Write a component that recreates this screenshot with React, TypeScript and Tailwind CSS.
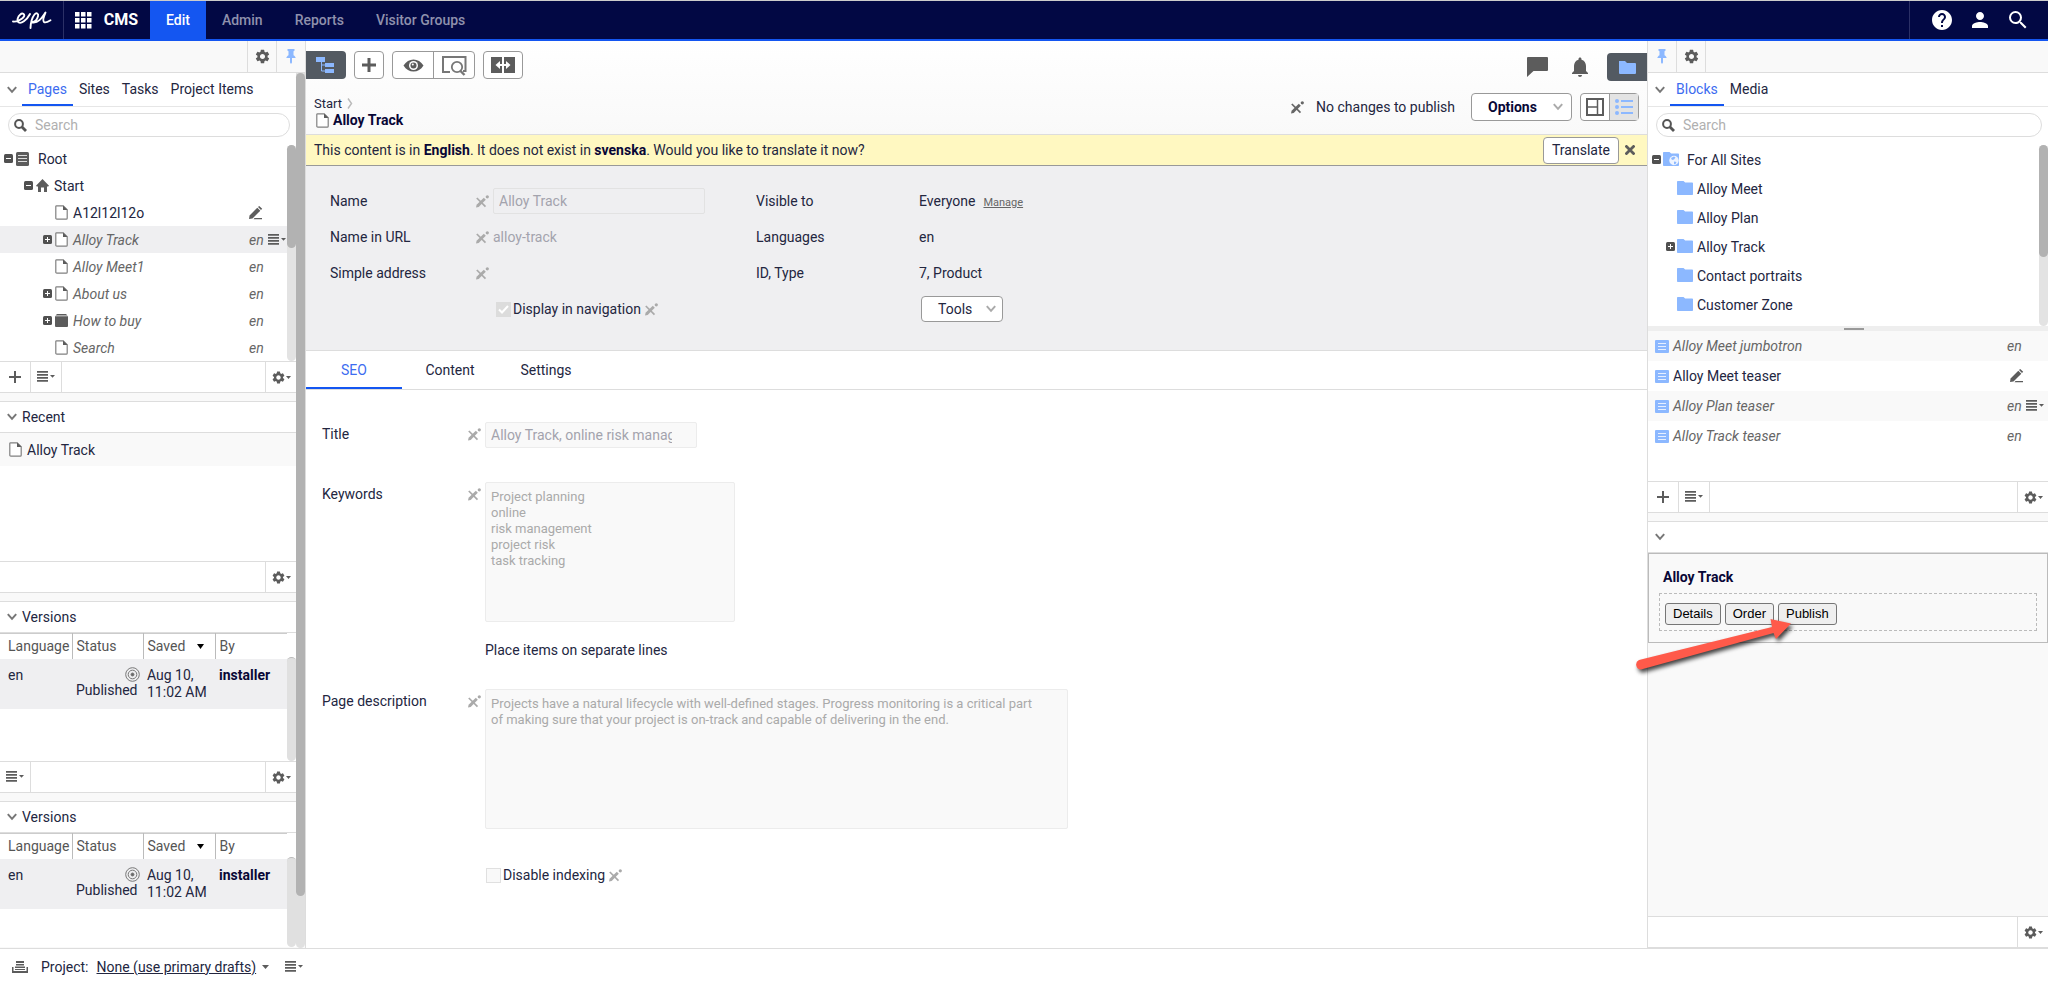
import { useState } from "react";
import type { ReactNode } from "react";
import clsx from "clsx";
import { MdHelp, MdNotifications, MdPerson, MdSearch, MdSettings } from "react-icons/md";

interface IconProps {
  className?: string;
}

function EpiLogo() {
  return (
    <svg width="40" height="20" viewBox="0 0 40 20" fill="none" stroke="white" strokeWidth="1.9" strokeLinecap="round" strokeLinejoin="round" aria-hidden="true">
      <path d="M1 11.5C4 12 10.5 9.500 12 6.500C13 4 10.500 2.500 8.300 4.500C5.800 6.500 4.500 10.500 6.500 12.300C9 14.300 14.500 10.500 18 4" />
      <path d="M18.500 18C18.700 13 20.500 7 22.500 4.500C24.500 2.200 26.800 3.500 26 6.300C25.200 9.500 22.500 12 20 12.300C26 13.500 29.500 8.500 33.500 2.500C31.500 7 30.500 10.500 32 12C33.500 13.200 36 11.800 38.500 10.200" />
    </svg>
  );
}

function AppsIcon() {
  return (
    <svg width="17" height="17" viewBox="0 0 17 17" fill="white" aria-hidden="true">
      <path d="M0 0h4.500v4.500H0zM6 0h4.500v4.500H6zM12 0h4.500v4.500H12zM0 6h4.500v4.500H0zM6 6h4.500v4.500H6zM12 6h4.500v4.500H12zM0 12h4.500v4.500H0zM6 12h4.500v4.500H6zM12 12h4.500v4.500H12z" />
    </svg>
  );
}

function ChevronDown({ className }: IconProps) {
  return (
    <svg width="10" height="8" viewBox="0 0 10 8" fill="none" stroke="currentColor" strokeWidth="2" className={className} aria-hidden="true">
      <path d="M0.800 1.200L5 5.800L9.200 1.200" />
    </svg>
  );
}

function Pin() {
  return (
    <svg width="10" height="15" viewBox="0 0 10 15" fill="#8cb8ff" aria-hidden="true">
      <path d="M1.500 0h7v1.800l-1 .4v4c1.200.6 2 1.500 2.200 2.800H6v4.500L5 15l-1-1.500V9H.3C.5 7.700 1.300 6.800 2.500 6.200v-4l-1-.4z" />
    </svg>
  );
}

function Magnifier() {
  return (
    <svg width="13" height="13" viewBox="0 0 13 13" fill="none" stroke="#555" aria-hidden="true">
      <circle cx="5" cy="5" r="3.900" strokeWidth="2" />
      <path d="M8 8l4 4" strokeWidth="2.800" />
    </svg>
  );
}

function PageIcon() {
  return (
    <svg width="13" height="15" viewBox="0 0 13 15" className="shrink-0" aria-hidden="true">
      <path d="M1.500.8h6.700L12.200 4.800v8.400a1 1 0 0 1-1 1H1.800a1 1 0 0 1-1-1V1.500a.7.7 0 0 1 .7-.7z" fill="white" stroke="#808080" strokeWidth="1.200" />
      <path d="M8 .5L12.500 5H8z" fill="#5c5c5c" />
    </svg>
  );
}

function RootIcon() {
  return (
    <svg width="13" height="14" viewBox="0 0 13 14" className="shrink-0" aria-hidden="true">
      <rect width="13" height="14" rx="1.500" fill="#5c5c5c" />
      <path d="M2 3.500h9M2 6.500h9M2 9.500h9" stroke="#ddd" />
    </svg>
  );
}

function HomeIcon() {
  return (
    <svg width="13" height="13" viewBox="0 0 13 13" fill="#5c5c5c" className="shrink-0" aria-hidden="true">
      <path d="M6.500 0L13 6.800l-.8.7H11V13H8V8.500H5V13H2V7.500H.8L0 6.800z" />
    </svg>
  );
}

function BoxIcon() {
  return (
    <svg width="13" height="13" viewBox="0 0 13 13" className="shrink-0" fill="#5c5c5c" aria-hidden="true">
      <path d="M2 0h9l1.500 1.500H.5z" />
      <path d="M0 2.200h13V12a1 1 0 0 1-1 1H1a1 1 0 0 1-1-1z" />
    </svg>
  );
}

function Expander({ open }: { open: boolean }) {
  return (
    <svg width="9" height="9" viewBox="0 0 9 9" className="shrink-0" aria-hidden="true">
      <rect width="9" height="9" rx="1.500" fill="#505050" />
      <path d={open ? "M2 4.500h5" : "M2 4.500h5M4.500 2v5"} stroke="white" />
    </svg>
  );
}

function PencilIcon() {
  return (
    <svg width="14" height="14" viewBox="0 0 14 14" fill="#5c5c5c" aria-hidden="true">
      <path d="M0 13l.6-3.500L8.300 1.800l3 3L3.500 12.500z" />
      <path d="M9 1.100L10.200 0 13.200 2.800l-1.200 1.300zM5.500 12h7.500v1.200H4.500z" />
    </svg>
  );
}

// pencil with a stroke across it, for values that can't be edited
function NoEdit({ className }: IconProps) {
  return (
    <svg width="13" height="13" viewBox="0 0 13 13" className={clsx("shrink-0", className)} aria-hidden="true">
      <path d="M.8 3l8.700 8.700" stroke="currentColor" strokeWidth="1.700" />
      <path d="M0 12.500l.6-2.700L7.800 2.700l2 2L2.700 11.900z" fill="currentColor" />
      <circle cx="11.300" cy="1.800" r="1.600" fill="currentColor" />
    </svg>
  );
}

function FolderIcon({ globe }: { globe?: boolean }) {
  return (
    <svg width="16" height="15" viewBox="0 0 16 15" className="shrink-0" aria-hidden="true">
      <path d="M.8 0h5.700l1.700 1.500h7c.5 0 .8.300.8.800v11c0 .5-.3.800-.8.800H.8c-.5 0-.8-.3-.8-.8V.8C0 .3.300 0 .8 0z" fill="#8cb8ff" />
      {globe && (
        <>
          <circle cx="11" cy="8.500" r="4.700" fill="#eef4ff" />
          <path d="M8 6l3-1.500 1.500 1-1.500 2-2 .5zM11 9.500l2.500.5-1 2-1.500.3z" fill="#8cb8ff" />
        </>
      )}
    </svg>
  );
}

function BlockIcon() {
  return (
    <svg width="14" height="13" viewBox="0 0 14 13" className="shrink-0" aria-hidden="true">
      <rect width="14" height="13" rx="1" fill="#8cb8ff" />
      <path d="M3 3.500h8M3 6.500h8M3 9.500h8" stroke="#e6efff" />
    </svg>
  );
}

function ListMenu() {
  return (
    <svg width="18" height="12" viewBox="0 0 18 12" fill="#5c5c5c" className="shrink-0" aria-hidden="true">
      <path d="M0 0h11v1.800H0zM0 3h11v1.800H0zM0 6h11v1.800H0zM0 9h11v1.800H0zM13 4h5l-2.500 2.800z" />
    </svg>
  );
}

function PlusIcon() {
  return (
    <svg width="12" height="12" viewBox="0 0 12 12" stroke="#5c5c5c" strokeWidth="2" aria-hidden="true">
      <path d="M6 0v12M0 6h12" />
    </svg>
  );
}

function GearMenu() {
  return (
    <span className="flex items-center text-[#5c5c5c]">
      <MdSettings size={15} />
      <svg width="5" height="3" viewBox="0 0 5 3" fill="currentColor" aria-hidden="true">
        <path d="M0 0h5L2.500 3z" />
      </svg>
    </span>
  );
}

function TargetIcon() {
  return (
    <svg width="15" height="15" viewBox="0 0 15 15" fill="none" stroke="#777" className="ml-auto" aria-hidden="true">
      <circle cx="7.500" cy="7.500" r="6.800" />
      <circle cx="7.500" cy="7.500" r="4.300" />
      <circle cx="7.500" cy="7.500" r="1.500" fill="#666" />
    </svg>
  );
}

function IconCell({ label, className, children }: { label: string; className?: string; children: ReactNode }) {
  return (
    <button type="button" aria-label={label} className={clsx("flex h-full shrink-0 items-center justify-center", className)}>
      {children}
    </button>
  );
}

function GadgetFooter({ add, menu }: { add?: boolean; menu?: boolean }) {
  return (
    <div className="flex h-8 shrink-0 border-y border-[#ddd] bg-white">
      {add && (
        <IconCell label="Add" className="w-[31px] border-r border-[#ddd]">
          <PlusIcon />
        </IconCell>
      )}
      {menu && (
        <IconCell label="Menu" className="w-[31px] border-r border-[#ddd]">
          <ListMenu />
        </IconCell>
      )}
      <IconCell label="Settings" className="ml-auto w-[31px] border-l border-[#ddd]">
        <GearMenu />
      </IconCell>
    </div>
  );
}

function GadgetHeader({ title }: { title?: string }) {
  return (
    <div className="mt-2 flex h-8 shrink-0 items-center gap-[5px] border-y border-[#ddd] bg-white px-[7px]">
      <ChevronDown className="text-[#777]" />
      {title && <h2>{title}</h2>}
    </div>
  );
}

function Scrollbar({ thumb }: { thumb: string }) {
  return (
    <div className="w-[9px] shrink-0 rounded-full bg-[#e3e3e3]">
      <div className={clsx("rounded-full bg-[#b2b2b2]", thumb)} />
    </div>
  );
}

function TabBar({ tabs }: { tabs: string[] }) {
  const [active, setActive] = useState(tabs[0]);
  return (
    <div className="flex h-[34px] shrink-0 items-stretch border-b border-[#e6e6e6] bg-white pl-[7px]">
      <ChevronDown className="mt-[13px] mr-[5px] text-[#777]" />
      {tabs.map((tab) => (
        <button
          key={tab}
          type="button"
          onClick={() => setActive(tab)}
          className={clsx("border-b-2 px-[6px]", active === tab ? "border-[#1456f1] text-[#3d6cf0]" : "border-transparent")}
        >
          {tab}
        </button>
      ))}
    </div>
  );
}

function SearchBox({ label }: { label: string }) {
  return (
    <div className="py-[6px] pr-[6px] pl-2">
      <label className="flex h-6 items-center gap-2 rounded-full border border-[#ddd] bg-white px-[5px]">
        <Magnifier />
        <input type="search" placeholder="Search" aria-label={label} className="min-w-0 flex-1 outline-none placeholder:text-[#b0b0b0]" />
      </label>
    </div>
  );
}

interface TreeItem {
  name: string;
  indent: string;
  icon: ReactNode;
  open?: boolean;
  lang?: string;
  edited?: boolean;
  selected?: boolean;
}

const pageTree: TreeItem[] = [
  { name: "Root", indent: "pl-1", icon: <RootIcon />, open: true },
  { name: "Start", indent: "pl-6", icon: <HomeIcon />, open: true },
  { name: "A12l12l12o", indent: "pl-[55px]", icon: <PageIcon />, edited: true },
  { name: "Alloy Track", indent: "pl-[43px]", icon: <PageIcon />, open: false, lang: "en", selected: true },
  { name: "Alloy Meet1", indent: "pl-[55px]", icon: <PageIcon />, lang: "en" },
  { name: "About us", indent: "pl-[43px]", icon: <PageIcon />, open: false, lang: "en" },
  { name: "How to buy", indent: "pl-[43px]", icon: <BoxIcon />, open: false, lang: "en" },
  { name: "Search", indent: "pl-[55px]", icon: <PageIcon />, lang: "en" },
];

const folders = [
  { name: "Alloy Meet" },
  { name: "Alloy Plan" },
  { name: "Alloy Track", closed: true },
  { name: "Contact portraits" },
  { name: "Customer Zone" },
];

const blocks = [
  { name: "Alloy Meet jumbotron", lang: "en" },
  { name: "Alloy Meet teaser" },
  { name: "Alloy Plan teaser", lang: "en", menu: true },
  { name: "Alloy Track teaser", lang: "en" },
];

function PageTree() {
  return (
    <div className="flex bg-white">
      <ul className="min-w-0 flex-1">
        {pageTree.map((item) => (
          <li key={item.name} className={clsx("flex h-[27px] items-center", item.indent, item.selected && "bg-[#efeff1]")}>
            {item.open !== undefined && (
              <span className="mr-[3px]">
                <Expander open={item.open} />
              </span>
            )}
            {item.icon}
            <span className={clsx(item.name === "Root" ? "ml-[9px]" : "ml-[5px]", item.lang && "text-[#666] italic")}>{item.name}</span>
            <span className="ml-auto flex w-[38px] items-center gap-1 text-[#666] italic">
              {item.lang}
              {item.edited && <PencilIcon />}
              {item.selected && <ListMenu />}
            </span>
          </li>
        ))}
      </ul>
      <Scrollbar thumb="h-[103px]" />
    </div>
  );
}

function Versions({ short }: { short?: boolean }) {
  return (
    <>
      <GadgetHeader title="Versions" />
      <div className={clsx("flex shrink-0 bg-white", short ? "h-[114px]" : "h-32")}>
        <div className="min-w-0 flex-1">
          <table className="w-full table-fixed border-collapse text-left">
            <thead>
              <tr className="h-[25px] border-t border-[#ccc] text-[#555]">
                <th className="w-[72px] border-r border-[#bbb] pl-2 font-normal">Language</th>
                <th className="w-[71px] border-r border-[#bbb] pl-1 font-normal">Status</th>
                <th className="w-[72px] border-r border-[#bbb] pl-1 font-normal">
                  <span className="flex items-center justify-between pr-[11px]">
                    Saved
                    <svg width="7" height="5" viewBox="0 0 7 5" aria-hidden="true">
                      <path d="M0 0h7L3.500 5z" />
                    </svg>
                  </span>
                </th>
                <th className="pl-1 font-normal">By</th>
              </tr>
            </thead>
            <tbody>
              <tr className="h-[50px] bg-[#efeff1] align-top leading-[17px]">
                <td className="pt-2 pl-2">en</td>
                <td className="pt-2 pr-[3px] pl-1">
                  <TargetIcon />
                  Published
                </td>
                <td className="pt-2 pl-1">
                  Aug 10,
                  <br />
                  11:02 AM
                </td>
                <td className="pt-2 pl-1 font-bold text-[#080736]">installer</td>
              </tr>
            </tbody>
          </table>
        </div>
        <div className="mt-6 w-[9px] shrink-0 rounded-full border-t border-[#bbb] bg-[#e0e0e0]" />
      </div>
    </>
  );
}

function LeftPane() {
  return (
    <aside className="flex w-[306px] shrink-0 flex-col overflow-hidden border-r border-[#ddd] bg-[#f9f9f9]">
      <div className="flex h-8 shrink-0 justify-end border-b border-[#ddd]">
        <IconCell label="Settings" className="w-[29px] border-l border-[#ddd] text-[#5c5c5c]">
          <MdSettings size={17} />
        </IconCell>
        <IconCell label="Unpin" className="w-[29px] border-l border-[#ddd]">
          <Pin />
        </IconCell>
      </div>
      <div className="flex min-h-0 flex-1">
        <div className="flex min-w-0 flex-1 flex-col overflow-hidden">
          <TabBar tabs={["Pages", "Sites", "Tasks", "Project Items"]} />
          <div className="bg-white">
            <SearchBox label="Search pages" />
          </div>
          <div className="shrink-0 bg-white pt-[2px]">
            <PageTree />
          </div>
          <GadgetFooter add menu />
          <GadgetHeader title="Recent" />
          <div className="h-32 shrink-0 bg-white">
            <a href="#alloy-track" className="flex h-[33px] items-center gap-[5px] bg-[#f9f9f9] pl-[9px]">
              <PageIcon />
              Alloy Track
            </a>
          </div>
          <GadgetFooter />
          <Versions />
          <GadgetFooter menu />
          <Versions short />
        </div>
        <div className="w-[9px] shrink-0 rounded-b-full bg-[#e0e0e0]">
          <div className="h-[94%] rounded-full bg-[#b2b2b2]" />
        </div>
      </div>
    </aside>
  );
}

function MainToolbar() {
  return (
    <header className="h-[94px] shrink-0 border-b border-[#ddd] bg-gradient-to-b from-white to-[#f9f9f9] pt-[10px]">
      <div className="flex h-[30px] items-start justify-between">
        <div className="flex h-7 gap-2">
          <IconCell label="Toggle navigation pane" className="w-10 rounded-r-sm bg-[#535a62]">
            <svg width="20" height="18" viewBox="0 0 20 18" fill="#8cb8ff" aria-hidden="true">
              <path d="M0 1h9v5H0zM9 7h9v4H9zM9 13h9v4H9z" />
              <path d="M5.500 6v9H9M5.500 9H9" fill="none" stroke="#8cb8ff" />
            </svg>
          </IconCell>
          <IconCell label="Add" className="w-[30px] rounded-sm border border-[#999] bg-white">
            <svg width="16" height="16" viewBox="0 0 16 16" stroke="#5c5c5c" strokeWidth="3" aria-hidden="true">
              <path d="M8 1v14M1 8h14" />
            </svg>
          </IconCell>
          <div className="flex rounded-sm border border-[#999] bg-white">
            <IconCell label="View settings" className="w-[41px] border-r border-[#999]">
              <svg width="21" height="13" viewBox="0 0 21 13" aria-hidden="true">
                <path d="M.5 6.500C3 2.500 6.500.5 10.500.5s7.500 2 10 6c-2.500 4-6 6-10 6s-7.500-2-10-6z" fill="#5c5c5c" />
                <circle cx="10.500" cy="6.500" r="4.500" fill="white" />
                <circle cx="10.500" cy="6.500" r="3" fill="#5c5c5c" />
                <circle cx="9.800" cy="5.500" r="1" fill="white" />
              </svg>
            </IconCell>
            <IconCell label="Preview" className="w-10">
              <svg width="25" height="21" viewBox="0 0 25 21" fill="none" stroke="#777" aria-hidden="true">
                <path d="M8 17H1V2h22.500v14H21" strokeWidth="2" />
                <circle cx="15" cy="12" r="5.200" fill="white" strokeWidth="1.800" />
                <path d="M18.500 16l4 4" strokeWidth="2.400" />
              </svg>
            </IconCell>
          </div>
          <IconCell label="Compare" className="w-10 rounded-sm border border-[#999] bg-white">
            <svg width="24" height="16" viewBox="0 0 24 16" aria-hidden="true">
              <path d="M0 0h11v16H0zM13 0h11v16H13z" fill="#5c5c5c" />
              <path d="M4.500 8L9 4v3h2v2H9v3zM19.500 8L15 4v3h-2v2h2v3z" fill="white" />
            </svg>
          </IconCell>
        </div>
        <div className="flex h-full items-center pt-[2px] text-[#5c5c5c]">
          <button type="button" aria-label="Comments" className="mr-5">
            <svg width="21" height="20" viewBox="0 0 21 20" fill="currentColor" aria-hidden="true">
              <path d="M1 0h19a1 1 0 0 1 1 1v12a1 1 0 0 1-1 1H6.500L0 20V1a1 1 0 0 1 1-1z" />
            </svg>
          </button>
          <button type="button" aria-label="Notifications" className="mr-[15px]">
            <MdNotifications size={24} />
          </button>
          <IconCell label="Toggle assets pane" className="w-10 rounded-l-sm bg-[#535a62]">
            <svg width="17" height="13" viewBox="0 0 17 13" fill="#8cb8ff" aria-hidden="true">
              <path d="M0 0h6l2 2h8a1 1 0 0 1 1 1v9a1 1 0 0 1-1 1H1a1 1 0 0 1-1-1z" />
            </svg>
          </IconCell>
        </div>
      </div>
      <div className="flex items-start justify-between px-2 pt-3">
        <div className="pt-[2px] leading-[17px]">
          <div className="flex items-center gap-[5px] text-[13px]">
            <a href="#start">Start</a>
            <svg width="6" height="11" viewBox="0 0 6 11" fill="none" stroke="#bbb" strokeWidth="1.500" aria-hidden="true">
              <path d="M1 .5l3.500 5-3.500 5" />
            </svg>
          </div>
          <h1 className="flex items-center gap-1 pl-[2px] font-bold text-[#080736]">
            <PageIcon />
            Alloy Track
          </h1>
        </div>
        <div className="flex items-center">
          <NoEdit className="mr-3 text-[#666]" />
          <span className="mr-4">No changes to publish</span>
          <button type="button" aria-haspopup="menu" className="mr-2 flex h-7 w-[101px] items-center justify-between rounded-sm border border-[#999] bg-white pr-2 pl-4 font-bold text-[#080736]">
            Options
            <ChevronDown className="text-[#aaa]" />
          </button>
          <div className="flex h-7 rounded-sm border border-[#999] bg-white">
            <IconCell label="On-page editing" className="w-[29px] border-r border-[#999]">
              <svg width="18" height="18" viewBox="0 0 18 18" fill="none" stroke="#5c5c5c" aria-hidden="true">
                <path d="M1 1h16v16H1z" strokeWidth="2" />
                <path d="M11.500 1v16M1 9h10.500" strokeWidth="1.500" />
              </svg>
            </IconCell>
            <IconCell label="All properties" className="w-7 bg-[#e3e3e3]">
              <svg width="18" height="16" viewBox="0 0 18 16" fill="#8cb8ff" aria-hidden="true">
                <circle cx="2" cy="2" r="2" />
                <circle cx="2" cy="8" r="2" />
                <circle cx="2" cy="14" r="2" />
                <path d="M6 1h12v2H6zM6 7h12v2H6zM6 13h12v2H6z" />
              </svg>
            </IconCell>
          </div>
        </div>
      </div>
    </header>
  );
}

function SettingsHeader() {
  return (
    <section className="flex h-[185px] shrink-0 border-b border-[#ddd] bg-[#efeff1] pt-[17px] pl-6">
      <div className="w-[426px]">
        <div className="flex h-9 items-center">
          <label htmlFor="name" className="w-[146px]">
            Name
          </label>
          <NoEdit className="mr-1 text-[#aaa]" />
          <input id="name" defaultValue="Alloy Track" disabled className="h-[26px] w-[212px] rounded-xs border border-[#e2e2e2] px-[5px] text-[#a3a3ad]" />
        </div>
        <div className="flex h-9 items-center">
          <span className="w-[146px]">Name in URL</span>
          <NoEdit className="mr-1 text-[#aaa]" />
          <span className="text-[#a3a3ad]">alloy-track</span>
        </div>
        <div className="flex h-9 items-center">
          <span className="w-[146px]">Simple address</span>
          <NoEdit className="text-[#aaa]" />
        </div>
        <div className="flex h-9 items-center pl-[166px]">
          <span className="relative flex">
            <input id="displayInNavigation" type="checkbox" defaultChecked disabled className="h-[15px] w-[15px] appearance-none bg-[#dcdcdc]" />
            <svg width="15" height="15" viewBox="0 0 15 15" fill="none" stroke="white" strokeWidth="2" className="pointer-events-none absolute inset-0" aria-hidden="true">
              <path d="M3 7.500l3 3 6-6.500" />
            </svg>
          </span>
          <label htmlFor="displayInNavigation" className="mr-1 ml-[2px]">
            Display in navigation
          </label>
          <NoEdit className="text-[#aaa]" />
        </div>
      </div>
      <div>
        <dl className="grid auto-rows-[36px] grid-cols-[163px_auto] items-center">
          <dt>Visible to</dt>
          <dd>
            Everyone
            <a href="#manage" className="ml-2 text-[11px] text-[#666] underline">
              Manage
            </a>
          </dd>
          <dt>Languages</dt>
          <dd>en</dd>
          <dt>ID, Type</dt>
          <dd>7, Product</dd>
        </dl>
        <button type="button" aria-haspopup="menu" className="mt-[5px] ml-[165px] flex h-[26px] w-[82px] items-center justify-between rounded-sm border border-[#999] bg-white pr-[6px] pl-4">
          Tools
          <ChevronDown className="text-[#aaa]" />
        </button>
      </div>
    </section>
  );
}

function FieldLabel({ id, children }: { id: string; children: ReactNode }) {
  return (
    <div className="flex w-[163px] shrink-0 items-center pt-[2px]">
      <label htmlFor={id} className="w-[146px]">
        {children}
      </label>
      <NoEdit className="text-[#aaa]" />
    </div>
  );
}

const formTabs = ["SEO", "Content", "Settings"];

const fieldStyle = "resize-none rounded-xs border border-[#ececec] bg-[#f9f9f9] pt-[6px] pl-[5px] text-[13px] leading-4 text-[#aaa]";

function MainPane() {
  const [tab, setTab] = useState("SEO");
  return (
    <main className="flex min-w-0 flex-1 flex-col overflow-hidden bg-white">
      <MainToolbar />
      <div className="flex h-[31px] shrink-0 items-center justify-between border-b border-[#999] bg-[#fff8c1] pr-3 pl-2">
        <p>
          This content is in <strong className="text-[#080736]">English</strong>. It does not exist in{" "}
          <strong className="text-[#080736]">svenska</strong>. Would you like to translate it now?
        </p>
        <div className="flex items-center gap-[6px]">
          <button type="button" className="h-[27px] w-[76px] rounded-sm border border-[#999] bg-white">
            Translate
          </button>
          <button type="button" aria-label="Close">
            <svg width="10" height="10" viewBox="0 0 10 10" stroke="#5c5c5c" strokeWidth="2.800" aria-hidden="true">
              <path d="M.5.500l9 9M9.500.500l-9 9" />
            </svg>
          </button>
        </div>
      </div>
      <SettingsHeader />
      <nav className="flex h-[39px] shrink-0 border-b border-[#ddd]">
        {formTabs.map((name) => (
          <button
            key={name}
            type="button"
            onClick={() => setTab(name)}
            className={clsx("w-24 border-b-2 pt-[2px]", tab === name ? "border-[#1456f1] text-[#3d6cf0]" : "border-transparent")}
          >
            {name}
          </button>
        ))}
      </nav>
      <form className="pt-8 pl-4">
        <div className="flex items-start">
          <FieldLabel id="title">Title</FieldLabel>
          <div className="flex h-[26px] w-[212px] items-center rounded-xs border border-[#ececec] bg-[#f9f9f9] pr-6 pl-[5px]">
            <input id="title" defaultValue="Alloy Track, online risk management" disabled className="w-full text-[#a3a3ad]" />
          </div>
        </div>
        <div className="mt-[34px] flex items-start">
          <FieldLabel id="keywords">Keywords</FieldLabel>
          <textarea
            id="keywords"
            disabled
            defaultValue={"Project planning\nonline\nrisk management\nproject risk\ntask tracking"}
            className={clsx(fieldStyle, "h-[140px] w-[250px]")}
          />
        </div>
        <p className="mt-[18px] pl-[163px]">Place items on separate lines</p>
        <div className="mt-[29px] flex items-start">
          <FieldLabel id="description">Page description</FieldLabel>
          <textarea
            id="description"
            disabled
            defaultValue="Projects have a natural lifecycle with well-defined stages. Progress monitoring is a critical part of making sure that your project is on-track and capable of delivering in the end."
            className={clsx(fieldStyle, "h-[140px] w-[583px] pr-6")}
          />
        </div>
        <div className="mt-9 flex items-center pl-[164px]">
          <input id="disableIndexing" type="checkbox" disabled className="h-[15px] w-[15px] appearance-none border border-[#e0e0e0] bg-[#f9f9f9]" />
          <label htmlFor="disableIndexing" className="mr-1 ml-[2px]">
            Disable indexing
          </label>
          <NoEdit className="text-[#aaa]" />
        </div>
      </form>
    </main>
  );
}

function RightPane() {
  return (
    <aside className="flex w-[401px] shrink-0 flex-col border-l border-[#ddd] bg-[#f9f9f9]">
      <div className="flex h-8 shrink-0 border-b border-[#ddd]">
        <IconCell label="Unpin" className="w-[29px] border-r border-[#ddd]">
          <Pin />
        </IconCell>
        <IconCell label="Settings" className="w-[29px] border-r border-[#ddd] text-[#5c5c5c]">
          <MdSettings size={17} />
        </IconCell>
      </div>
      <TabBar tabs={["Blocks", "Media"]} />
      <div className="bg-white">
        <SearchBox label="Search blocks" />
      </div>
      <div className="flex h-[183px] shrink-0 bg-white pt-[2px]">
        <ul className="flex-1">
          <li className="flex h-[29px] items-center pl-1">
            <Expander open />
            <span className="mr-2 ml-[2px]">
              <FolderIcon globe />
            </span>
            For All Sites
          </li>
          {folders.map((folder) => (
            <li key={folder.name} className={clsx("flex h-[29px] items-center", folder.closed ? "pl-[18px]" : "pl-[29px]")}>
              {folder.closed && (
                <span className="mr-[2px]">
                  <Expander open={false} />
                </span>
              )}
              <FolderIcon />
              <span className="ml-1">{folder.name}</span>
            </li>
          ))}
        </ul>
        <Scrollbar thumb="h-28" />
      </div>
      <div className="flex h-[5px] shrink-0 items-center justify-center bg-[#eee] pl-3">
        <div className="h-[2px] w-5 bg-[#999]" />
      </div>
      <ul className="h-[150px] shrink-0 bg-white">
        {blocks.map((block) => (
          <li key={block.name} className="flex h-[30px] items-center gap-1 pl-[7px] odd:bg-[#f9f9f9]">
            <BlockIcon />
            <span className={clsx(block.lang && "text-[#666] italic")}>{block.name}</span>
            <span className="ml-auto flex w-[41px] items-center gap-1 text-[#666] italic">
              {block.lang ?? (
                <span className="pl-[3px]">
                  <PencilIcon />
                </span>
              )}
              {block.menu && <ListMenu />}
            </span>
          </li>
        ))}
      </ul>
      <GadgetFooter add menu />
      <GadgetHeader />
      <section className="relative h-[90px] shrink-0 border border-[#bbb] px-[10px] pt-[13px]">
        <h2 className="pl-1 font-bold text-[#080736]">Alloy Track</h2>
        <div className="mt-[6px] flex h-[38px] items-center gap-1 border border-dashed border-[#bbb] pt-1 pl-[5px] font-['Liberation_Sans',Arial,sans-serif] text-[13px] text-black">
          {["Details", "Order", "Publish"].map((action) => (
            <button key={action} type="button" className="h-[22px] rounded-[3px] border border-[#767676] bg-[#efefef] px-[7px]">
              {action}
            </button>
          ))}
        </div>
        {/* arrow pointing at the Publish button */}
        <svg width="166" height="64" viewBox="0 0 166 64" className="pointer-events-none absolute top-[60px] left-[-16px] overflow-visible" aria-hidden="true">
          <path
            d="M6 46L139 13L137.500 5L158 9.500L143 25L140.500 19L8 55.500A5 5 0 0 1 6 46Z"
            fill="#ff5a4a"
            className="drop-shadow-[2px_3px_2px_rgba(0,0,0,0.750)]"
          />
        </svg>
      </section>
      <div className="mt-auto">
        <GadgetFooter />
      </div>
    </aside>
  );
}

const navItems = ["Edit", "Admin", "Reports", "Visitor Groups"];

export default function App() {
  return (
    <div className="flex h-screen flex-col overflow-hidden bg-white font-[Roboto,sans-serif] text-sm text-[#23263f]">
      <header className="flex h-[41px] shrink-0 border-t border-b-2 border-t-[#ccc] border-b-[#1456f1] bg-[#020844] text-white">
        <a href="#home" aria-label="Home" className="flex w-16 items-center justify-center border-r border-[#2b3066]">
          <EpiLogo />
        </a>
        <div className="flex w-[86px] items-center justify-between pr-3 pl-[11px]">
          <button type="button" aria-label="Products">
            <AppsIcon />
          </button>
          <span className="text-base font-bold">CMS</span>
        </div>
        <nav className="flex">
          {navItems.map((item, i) => (
            <a key={item} href="#nav" className={clsx("flex items-center px-4 font-medium", i === 0 ? "bg-[#1456f1]" : "text-[#8f91ad]")}>
              {item}
            </a>
          ))}
        </nav>
        <div className="ml-auto flex w-[139px] items-center gap-[14px] border-l border-[#2b3066] pl-5">
          <button type="button" aria-label="Help">
            <MdHelp size={24} />
          </button>
          <button type="button" aria-label="Account">
            <MdPerson size={24} />
          </button>
          <button type="button" aria-label="Search">
            <MdSearch size={24} />
          </button>
        </div>
      </header>
      <div className="flex min-h-0 flex-1">
        <LeftPane />
        <MainPane />
        <RightPane />
      </div>
      <footer className="flex h-9 shrink-0 items-center border-t border-[#ddd] pl-3">
        <svg width="16" height="12" viewBox="0 0 16 12" fill="#5c5c5c" aria-hidden="true">
          <path d="M4 0h8v2H4zM4 3h8v1.500H4zM3 5.500h10V7H3zM0 6h1.500v4h13V6H16v6H0zM3 8h10v1H3z" />
        </svg>
        <span className="ml-[13px]">Project:</span>
        <button type="button" className="ml-2 flex items-center gap-[6px]">
          <span className="underline">None (use primary drafts)</span>
          <svg width="7" height="4" viewBox="0 0 7 4" fill="#5c5c5c" aria-hidden="true">
            <path d="M0 0h7L3.500 4z" />
          </svg>
        </button>
        <button type="button" aria-label="Project menu" className="ml-4">
          <ListMenu />
        </button>
      </footer>
    </div>
  );
}
